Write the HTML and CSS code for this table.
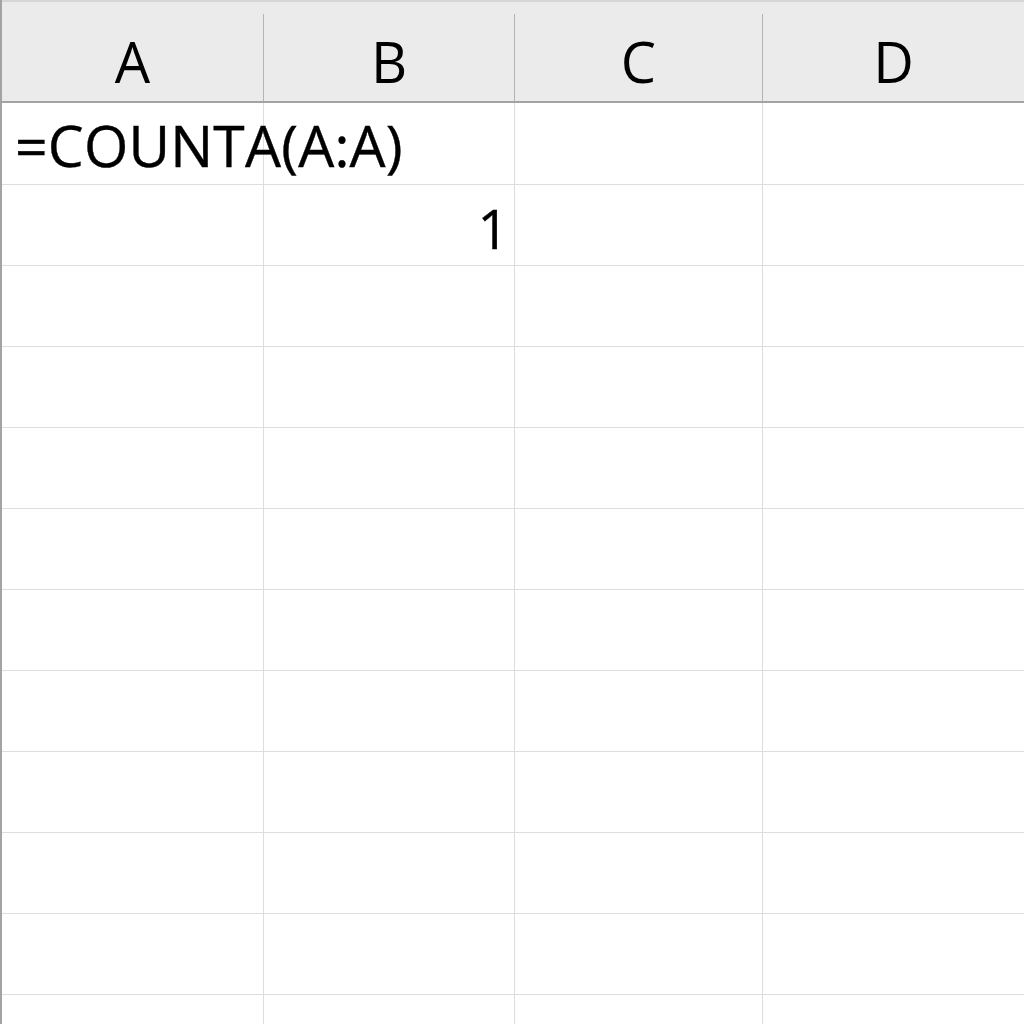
FILE: index.html
```html
<!DOCTYPE html>
<html lang="en">
<head>
    <meta charset="UTF-8">
    <title>Sheet</title>
    <link rel="stylesheet" href="styles.css">
</head>
<body>
    <div class="sheet">
        <div class="head">
            <div class="col-head"><span>A</span></div>
            <div class="col-head"><span>B</span></div>
            <div class="col-head"><span>C</span></div>
            <div class="col-head"><span>D</span></div>
        </div>

        <div class="grid first-rows">
            <div class="cell text">=COUNTA(A:A)</div>
            <div class="cell"></div>
            <div class="cell"></div>
            <div class="cell"></div>

            <div class="cell"></div>
            <div class="cell num">1</div>
            <div class="cell"></div>
            <div class="cell"></div>
        </div>
        <div class="grid" id="emptyRows"></div>
    </div>

    <script>
    // filas vacías de la hoja
    const emptyRows = document.getElementById('emptyRows');
    for (let i = 0; i < 10 * 4; i++) {
        const cell = document.createElement('div');
        cell.className = 'cell';
        emptyRows.appendChild(cell);
    }
    </script>
</body>
</html>
```

FILE: styles.css
```css
/* Página */
body {
    margin: 0;
    background: #ffffff;
    font-family: "Open Sans", "Noto Sans", sans-serif;
    color: #000;
    overflow: hidden;
}

.sheet {
    width: 1024px;
    height: 1024px;
    overflow: hidden;
    border-left: 2px solid #a3a3a3;
    box-sizing: border-box;
}

/* Fila de encabezados de columna */
.head {
    display: grid;
    grid-template-columns: 262px 251px 248px 1fr;
    height: 103px;
    box-sizing: border-box;
    background: #ebebeb;
    border-top: 2px solid #d6d6d6;
    border-bottom: 2px solid #a3a3a3;
}

.col-head {
    margin-top: 12px;
    border-right: 1px solid #b4b4b4;
    display: flex;
    justify-content: center;
    align-items: center;
    font-size: 56px;
    padding-top: 7px;
}

.col-head:last-child {
    border-right: none;
}

/* Celdas */
.grid {
    display: grid;
    grid-template-columns: 262px 251px 248px 1fr;
    grid-auto-rows: 81px;
}

.first-rows {
    grid-template-rows: 82px 81px;
}

.cell {
    box-sizing: border-box;
    border-right: 1px solid #dedede;
    border-bottom: 1px solid #dedede;
    display: flex;
    align-items: center;
    white-space: nowrap;
}

.cell:nth-child(4n) {
    border-right: none;
}

.text {
    font-size: 57px;
    padding-left: 13px;
    padding-top: 2px;
    letter-spacing: 0.2px;
    -webkit-text-stroke: 0.4px #000;
}

.num {
    font-size: 55px;
    justify-content: flex-end;
    padding-right: 5px;
    padding-top: 4px;
    -webkit-text-stroke: 0.4px #000;
}
```
